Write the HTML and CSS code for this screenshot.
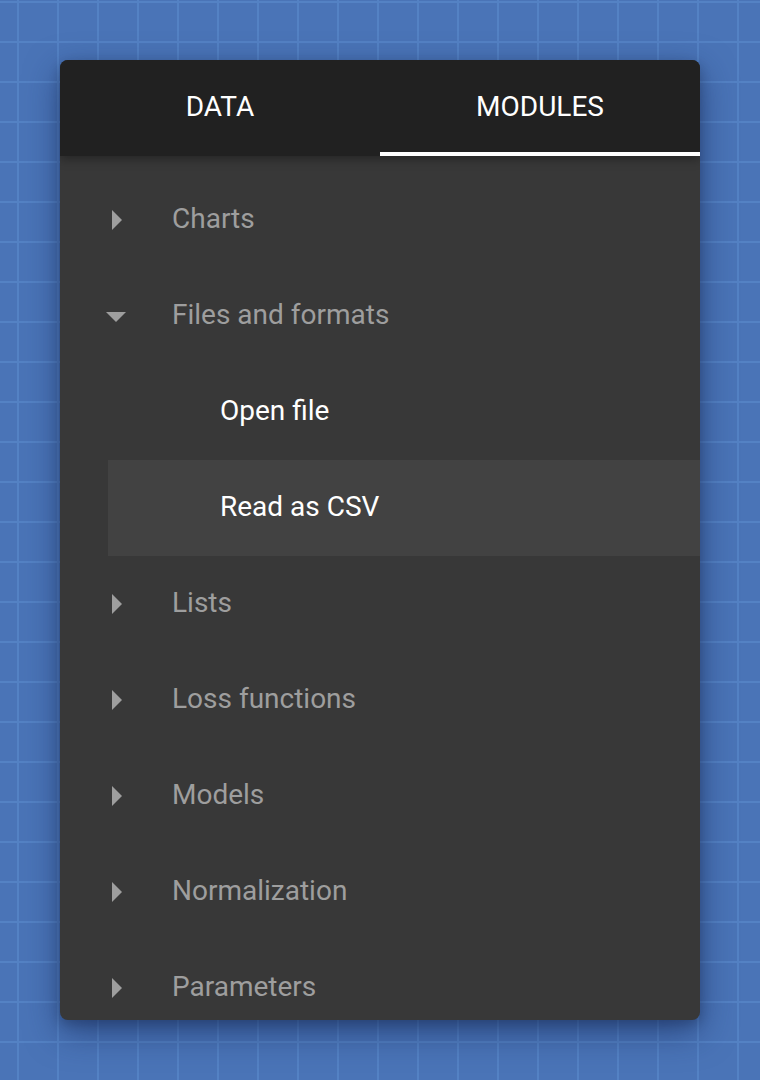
FILE: index.html
```html
<!DOCTYPE html>
<html>
<head>
<meta charset="utf-8">
<link rel="stylesheet" href="styles.css">
</head>
<body>
<div class="card">
  <div class="tabs">
    <div class="tab">DATA</div>
    <div class="tab active">MODULES</div>
  </div>
  <div class="list">
    <div class="item">
      <svg class="icon" viewBox="0 0 24 24"><path d="M10 17l5-5-5-5v10z"/></svg>
      <span class="label">Charts</span>
    </div>
    <div class="item">
      <svg class="icon" viewBox="0 0 24 24"><path d="M7 10l5 5 5-5z"/></svg>
      <span class="label">Files and formats</span>
    </div>
    <div class="item nested">
      <span class="label">Open file</span>
    </div>
    <div class="item nested selected">
      <span class="label">Read as CSV</span>
    </div>
    <div class="item">
      <svg class="icon" viewBox="0 0 24 24"><path d="M10 17l5-5-5-5v10z"/></svg>
      <span class="label">Lists</span>
    </div>
    <div class="item">
      <svg class="icon" viewBox="0 0 24 24"><path d="M10 17l5-5-5-5v10z"/></svg>
      <span class="label">Loss functions</span>
    </div>
    <div class="item">
      <svg class="icon" viewBox="0 0 24 24"><path d="M10 17l5-5-5-5v10z"/></svg>
      <span class="label">Models</span>
    </div>
    <div class="item">
      <svg class="icon" viewBox="0 0 24 24"><path d="M10 17l5-5-5-5v10z"/></svg>
      <span class="label">Normalization</span>
    </div>
    <div class="item">
      <svg class="icon" viewBox="0 0 24 24"><path d="M10 17l5-5-5-5v10z"/></svg>
      <span class="label">Parameters</span>
    </div>
  </div>
</div>
</body>
</html>
```
FILE: styles.css
```css
html, body {
  margin: 0;
  padding: 0;
}
body {
  width: 760px;
  height: 1080px;
  overflow: hidden;
  font-family: Roboto, "Liberation Sans", sans-serif;
  background-color: #4a74b7;
  background-image:
    linear-gradient(to right, transparent 17px, #5482c4 17px, #5482c4 19px, transparent 19px),
    linear-gradient(to bottom, transparent 1px, #5482c4 1px, #5482c4 3px, transparent 3px);
  background-size: 40px 40px, 40px 40px;
  padding: 60px;
  box-sizing: border-box;
}
.card {
  width: 640px;
  height: 960px;
  border-radius: 8px;
  overflow: hidden;
  background: #383838;
  box-shadow: 0 12px 34px rgba(20, 40, 90, 0.6), 0 4px 12px rgba(0, 0, 0, 0.2);
}
.tabs {
  display: flex;
  height: 96px;
  background: #212121;
  position: relative;
  z-index: 1;
  box-shadow: 0 3px 10px rgba(0, 0, 0, 0.35);
}
.tab {
  flex: 1;
  display: flex;
  align-items: center;
  justify-content: center;
  color: #ffffff;
  font-size: 28px;
  font-weight: 400;
  border-bottom: 4px solid transparent;
}
.tab.active {
  border-bottom-color: #ffffff;
}
.list {
  padding-top: 16px;
}
.item {
  display: flex;
  align-items: center;
  height: 96px;
  padding-left: 32px;
  gap: 32px;
}
.icon {
  width: 48px;
  height: 48px;
  fill: #9e9e9e;
  flex: none;
}
.label {
  font-size: 28px;
  color: #9e9e9e;
  margin-bottom: 4px;
}
.item.nested {
  margin-left: 48px;
  padding-left: 112px;
}
.item.nested .label {
  color: #ffffff;
}
.item.selected {
  background: #424242;
}
```
